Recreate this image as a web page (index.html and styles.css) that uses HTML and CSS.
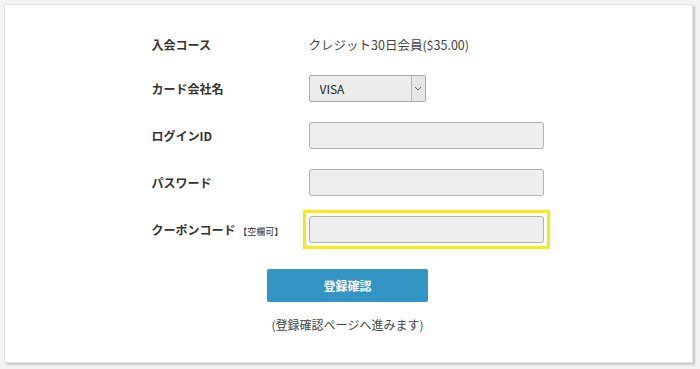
FILE: index.html
```html
<html>
    <head>
        <meta charset="utf-8">
        <link rel="stylesheet" href="styles.css">
    </head>
    <body>
        <div class="card">
            <div class="form">
                <div class="row">
                    <div class="label">入会コース</div>
                    <div class="field">クレジット30日会員($35.00)</div>
                </div>
                <div class="row">
                    <div class="label">カード会社名</div>
                    <div class="field">
                        <div class="select-wrap">
                            <select class="select">
                                <option>VISA</option>
                                <option>MasterCard</option>
                                <option>JCB</option>
                            </select>
                            <span class="arrow">
                                <svg width="8" height="5" viewBox="0 0 8 5"><path d="M1 1 L4 4 L7 1" fill="none" stroke="#666" stroke-width="1"/></svg>
                            </span>
                        </div>
                    </div>
                </div>
                <div class="row">
                    <div class="label">ログインID</div>
                    <div class="field"><input class="input" type="text"></div>
                </div>
                <div class="row">
                    <div class="label">パスワード</div>
                    <div class="field"><input class="input" type="password"></div>
                </div>
                <div class="row">
                    <div class="label">クーポンコード <span class="small">【空欄可】</span></div>
                    <div class="field">
                        <div class="highlight"><input class="input" type="text"></div>
                    </div>
                </div>
            </div>
            <div class="actions">
                <button class="submit">登録確認</button>
                <div class="note">(登録確認ページへ進みます)</div>
            </div>
        </div>
    </body>
</html>
```

FILE: styles.css
```css
*{
  margin:0px;
  box-sizing:border-box;
}

body{
  background:#f3f3f3;
  font-family:"Noto Sans CJK JP", "Open Sans", sans-serif;
  color:#333;
  font-size:12px;
}

.card{
  width:689px;
  height:359px;
  margin:4px 0px 0px 4px;
  background:#fff;
  border:1px solid #e2e2e2;
  box-shadow:2px 2px 2px rgba(0,0,0,0.18);
  padding:19px 2px 0px 0px;
}

.form{
  width:392px;
  margin:0px auto;
}

.row{
  display:flex;
  align-items:center;
  padding:10px 0px;
  min-height:41px;
}

.label{
  width:157px;
  font-weight:700;
  color:#333;
}

.small{
  font-size:9px;
  font-weight:400;
}

.field{
  flex:1;
  font-size:12.5px;
  color:#444;
}

.select-wrap{
  position:relative;
  width:117px;
  height:27px;
}

.select{
  appearance:none;
  -webkit-appearance:none;
  width:100%;
  height:100%;
  border:1px solid #aaa;
  border-radius:2px;
  background:#ececec;
  font-family:"Noto Sans CJK JP", "Open Sans", sans-serif;
  font-size:12px;
  color:#222;
  padding:0px 10px;
  outline:none;
}

.arrow{
  position:absolute;
  top:1px;
  right:1px;
  width:14px;
  height:25px;
  border-left:1px solid #b5b5b5;
  background:#e6e6e6;
  display:flex;
  align-items:center;
  justify-content:center;
  pointer-events:none;
}

.input{
  width:235px;
  height:27px;
  border:1px solid #b0b0b0;
  border-radius:3px;
  background:#eeeeee;
  outline:none;
  display:block;
}

.highlight{
  display:inline-block;
  border:3px solid #f6ec12;
  padding:3px;
  margin:-6px;
}

.actions{
  display:flex;
  flex-direction:column;
  align-items:center;
  margin-top:16px;
}

.submit{
  width:161px;
  height:33px;
  background:#3295c3;
  border:none;
  border-radius:2px;
  color:#fff;
  font-family:"Noto Sans CJK JP", "Open Sans", sans-serif;
  font-weight:700;
  font-size:12px;
}

.note{
  margin-top:14px;
  font-size:12px;
  color:#444;
}
```
